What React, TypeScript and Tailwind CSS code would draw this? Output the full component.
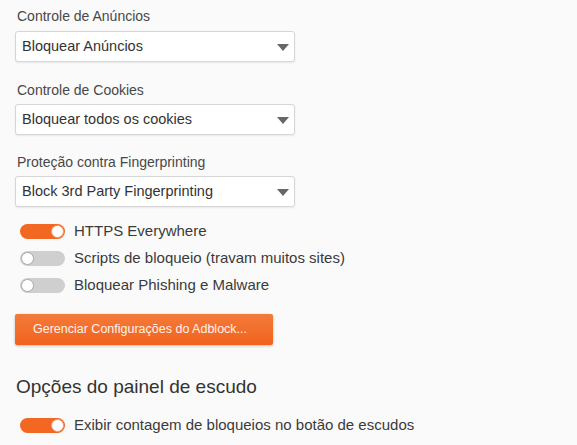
import React from "react";

function Select({ value }: { value: string }) {
  return (
    <div className="relative flex h-[31px] w-[280px] items-center rounded-[3px] border border-[#d6d6d6] bg-white pl-[6px] text-[14.5px] text-[#333] shadow-[0_1px_2px_rgba(0,0,0,0.08)]">
      <span>{value}</span>
      <svg className="absolute right-[5px] top-[12px]" width="12" height="7" viewBox="0 0 12 7">
        <path d="M0 0 L12 0 L6 7 Z" fill="#666" />
      </svg>
    </div>
  );
}

function Toggle({ on, label }: { on: boolean; label: string }) {
  return (
    <div className="flex h-[27px] items-center">
      <div className="ml-[5px] mr-[9px] flex h-[15px] w-[45px] items-center rounded-full">
        {on ? (
          <div className="flex h-[15px] w-[45px] items-center justify-end rounded-full bg-[#f26722] pr-[1px]">
            <div className="h-[13px] w-[13px] rounded-full border border-[#e8a07a] bg-white" />
          </div>
        ) : (
          <div className="flex h-[15px] w-[45px] items-center justify-start rounded-full bg-[#cfcfcf] pl-[1px]">
            <div className="h-[13px] w-[13px] rounded-full border border-[#aaa] bg-white" />
          </div>
        )}
      </div>
      <span className="text-[15px] text-[#3a3a3a]">{label}</span>
    </div>
  );
}

export default function App() {
  return (
    <div
      className="h-[445px] w-[577px] overflow-hidden bg-[#fafafa] pl-[15px] pt-[6px]"
      style={{ fontFamily: '"Liberation Sans", Arial, sans-serif' }}
    >
      <div className="flex flex-col">
        <div className="ml-[2px] text-[14px] leading-[20px] text-[#484848]">Controle de Anúncios</div>
        <div className="mt-[5px]">
          <Select value="Bloquear Anúncios" />
        </div>
        <div className="ml-[2px] mt-[18px] text-[14px] leading-[20px] text-[#484848]">Controle de Cookies</div>
        <div className="mt-[4px]">
          <Select value="Bloquear todos os cookies" />
        </div>
        <div className="ml-[2px] mt-[17px] text-[14px] leading-[20px] text-[#484848]">Proteção contra Fingerprinting</div>
        <div className="mt-[4px]">
          <Select value="Block 3rd Party Fingerprinting" />
        </div>
        <div className="mt-[11px] flex flex-col">
          <Toggle on label="HTTPS Everywhere" />
          <Toggle on={false} label="Scripts de bloqueio (travam muitos sites)" />
          <Toggle on={false} label="Bloquear Phishing e Malware" />
        </div>
        <div className="mt-[15px]">
          <button className="flex h-[31px] w-[258px] items-center rounded-[2px] bg-gradient-to-b from-[#f47a3a] to-[#f0621c] pl-[18px] text-[12.5px] text-[#fff3ea] shadow-[0_1px_3px_rgba(0,0,0,0.25)]">
            Gerenciar Configurações do Adblock...
          </button>
        </div>
        <div className="ml-[1px] mt-[29px] text-[19px] leading-[26px] text-[#333]">Opções do painel de escudo</div>
        <div className="mt-[12px] flex flex-col">
          <Toggle on label="Exibir contagem de bloqueios no botão de escudos" />
          <Toggle on={false} label="Mostrar visão avançada" />
        </div>
      </div>
    </div>
  );
}
